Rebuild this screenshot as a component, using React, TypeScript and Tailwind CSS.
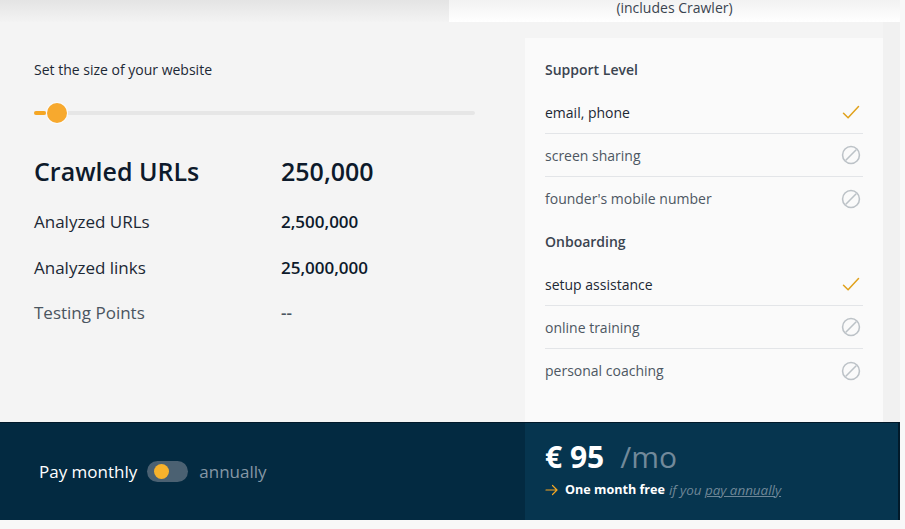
import React from "react";

const font = { fontFamily: '"Open Sans", "Noto Sans", sans-serif' };

function CheckIcon() {
  return (
    <svg width="20" height="20" viewBox="0 0 24 24" fill="none" stroke="#e0a11b" strokeWidth="1.8" strokeLinecap="round" strokeLinejoin="round">
      <path d="M3 13.5 8.5 19 21 5.5" />
    </svg>
  );
}

function NoIcon() {
  return (
    <svg width="22" height="22" viewBox="0 0 24 24" fill="none" stroke="#bcc2c7" strokeWidth="1.7" strokeLinecap="round">
      <circle cx="12" cy="12" r="9.2" />
      <path d="M6.6 17.4 17.4 6.6" />
    </svg>
  );
}

function Row({ label, ok, last }: { label: string; ok: boolean; last?: boolean }) {
  return (
    <div className={"flex h-[43px] items-center justify-between " + (last ? "" : "border-b border-[#e3e5e8]")}>
      <span className={"text-[14px] " + (ok ? "text-[#1c2835]" : "text-[#4d5762]")}>{label}</span>
      <span className="mr-[1px] flex w-[22px] justify-center">{ok ? <CheckIcon /> : <NoIcon />}</span>
    </div>
  );
}

export default function App() {
  return (
    <div className="h-[529px] w-[905px] overflow-hidden bg-[#f8f8f8]" style={font}>
      <div className="w-[900px] bg-[#f4f4f4]">
        {/* top strip */}
        <div className="flex h-[22px]">
          <div className="w-[449px] bg-gradient-to-b from-[#e4e4e4] to-[#f3f3f3]" />
          <div className="flex flex-1 justify-center bg-gradient-to-b from-[#f2f2f2] to-[#ffffff]">
            <span className="text-[14px] leading-[15px] text-[#3a4450]">(includes Crawler)</span>
          </div>
        </div>

        {/* main */}
        <div className="flex h-[400px]">
          <div className="w-[525px] pl-[34px] pr-[50px] pt-[38px]">
            <div className="text-[14px] leading-[20px] text-[#1c2835]">Set the size of your website</div>
            <div className="relative mt-[22px] flex h-[22px] items-center">
              <div className="h-[4px] w-full rounded-full bg-[#e6e6e6]" />
              <div className="absolute left-0 top-[9px] h-[4px] w-[12px] rounded-full bg-[#f5a623]" />
              <div className="absolute left-[13px] top-[1px] h-[20px] w-[20px] rounded-full bg-[#f7a92e] shadow-[0_0_0_1px_#fbfbfb]" />
            </div>
            <div className="mt-[31px] flex h-[32px] items-center text-[25px] font-semibold leading-[32px] text-[#0d1a2b]">
              <span className="w-[247px]">Crawled URLs</span>
              <span>250,000</span>
            </div>
            <div className="mt-[12px]">
              <div className="flex h-[46px] items-center">
                <span className="w-[247px] text-[17px] text-[#1c2835]">Analyzed URLs</span>
                <span className="text-[17px] font-semibold text-[#0d1a2b]">2,500,000</span>
              </div>
              <div className="flex h-[45px] items-center">
                <span className="w-[247px] text-[17px] text-[#1c2835]">Analyzed links</span>
                <span className="text-[17px] font-semibold text-[#0d1a2b]">25,000,000</span>
              </div>
              <div className="flex h-[46px] items-center">
                <span className="w-[247px] text-[17px] text-[#4a5560]">Testing Points</span>
                <span className="text-[17px] font-semibold text-[#4a5560]">--</span>
              </div>
            </div>
          </div>

          <div className="mt-[16px] w-[358px] bg-[#fafafa] px-[20px] pt-[22px]">
            <div className="text-[14px] font-semibold leading-[20px] text-[#3a4450]">Support Level</div>
            <div className="mt-[11px]">
              <Row label="email, phone" ok />
              <Row label="screen sharing" ok={false} />
              <Row label="founder's mobile number" ok={false} last />
            </div>
            <div className="mt-[12px] text-[14px] font-semibold leading-[20px] text-[#3a4450]">Onboarding</div>
            <div className="mt-[11px]">
              <Row label="setup assistance" ok />
              <Row label="online training" ok={false} />
              <Row label="personal coaching" ok={false} last />
            </div>
          </div>
          <div className="flex-1 bg-[#f1f1f1]" />
        </div>

        {/* bottom bar */}
        <div className="flex h-[98px] border-t border-[#01192a] border-r-[2px] border-r-[#021a2a]">
          <div className="flex w-[525px] items-center bg-[#032a41] pl-[39px]">
            <span className="text-[17px] font-medium text-white">Pay monthly</span>
            <div className="ml-[10px] flex h-[21px] w-[41px] items-center rounded-full bg-[#4b6172] pl-[7px]">
              <div className="h-[15px] w-[15px] rounded-full bg-[#f7b22c]" />
            </div>
            <span className="ml-[11px] text-[17px] text-[#8597a5]">annually</span>
          </div>
          <div className="flex flex-1 flex-col justify-center bg-[#06354f] pb-[6px] pl-[20px]">
            <div className="flex items-baseline text-[30px] leading-[36px]">
              <span className="font-bold text-white">€ 95</span>
              <span className="ml-[16px] font-normal text-[#71899a]">/mo</span>
            </div>
            <div className="mt-[6px] flex items-center text-[12.6px] leading-[18px]">
              <svg width="14" height="12" viewBox="0 0 14 12" fill="none" stroke="#f5a623" strokeWidth="1.2" strokeLinecap="round" strokeLinejoin="round">
                <path d="M1 6h11M7.5 1.5 12 6l-4.5 4.5" />
              </svg>
              <span className="ml-[6px] font-bold text-white">One month free</span>
              <span className="ml-[4px] text-[13.4px] italic text-[#6f8797]">if you <span className="underline">pay annually</span></span>
            </div>
          </div>
        </div>
      </div>
    </div>
  );
}
